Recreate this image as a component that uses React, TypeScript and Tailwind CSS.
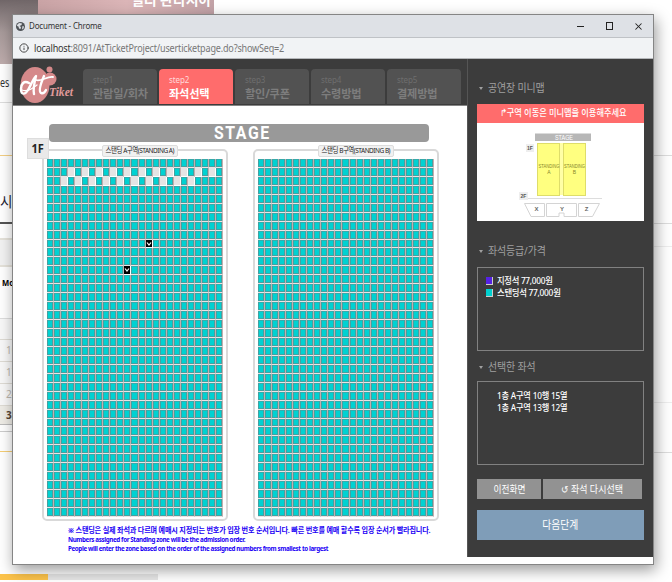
import React from "react";
import { Info, X } from "lucide-react";

const STEPS = [
  ["step1", "관람일/회차"],
  ["step2", "좌석선택"],
  ["step3", "할인/쿠폰"],
  ["step4", "수령방법"],
  ["step5", "결제방법"],
];

const COLS = Array.from({ length: 25 }, (_, i) => i);
const ROWS = Array.from({ length: 40 }, (_, i) => i);

function seatKind(zone: string, row: number, col: number) {
  if (zone !== "A") return "open";
  if ((row === 9 && col === 14) || (row === 12 && col === 11)) return "picked";
  if (row === 1 && col > 2 && col % 2 === 1) return "taken";
  if (row === 2 && col > 1 && col < 21 && col % 2 === 0) return "taken";
  return "open";
}

function Seat({ kind }: { kind: string }) {
  if (kind === "taken") return <div className="mr-px mb-px bg-[#e4e4e4]" />;
  if (kind === "picked")
    return (
      <div className="mr-px mb-px flex items-center justify-center bg-black">
        <svg viewBox="0 0 6 8" className="h-2 w-1.5">
          <path d="M1 2.5 3 5 5 2.5" fill="none" stroke="#fff" strokeWidth="1.2" />
        </svg>
      </div>
    );
  return (
    <div className="border-r border-b border-r-[#c4aeae] border-b-[#eae4e4]">
      <div className="h-full border border-[#45a0a0] border-t-[#35acac] bg-[#00d2d2]" />
    </div>
  );
}

function Zone({ name }: { name: string }) {
  return (
    <section className="relative h-[372px] w-[186px] rounded-[5px] border-2 border-[#d9d9d9] pt-2 pl-[3px]">
      <h3 className={"absolute -top-[6px] flex h-3 w-[76px] items-center justify-center rounded-xs border border-[#dcdcdc] bg-[#f1f1f1] text-[7.5px] whitespace-nowrap text-[#222] " + (name === "A" ? "left-[58px]" : "left-[63px]")}>
        <span className="scale-x-[0.86] tracking-[-0.55px]">스탠딩 {name}구역(STANDING {name})</span>
      </h3>
      <div className="grid h-[358px] w-[176px] grid-cols-[repeat(25,minmax(0,1fr))] grid-rows-[repeat(40,minmax(0,1fr))]">
        {ROWS.map((r) => COLS.map((c) => <Seat key={r + "-" + c} kind={seatKind(name, r, c)} />))}
      </div>
    </section>
  );
}

function SideTitle({ children }: { children: React.ReactNode }) {
  return (
    <h2 className="flex h-4 items-center gap-[5px] pl-0.5 text-[11px] tracking-[-0.1px] text-[#a0a0a0]">
      <span className="h-0 w-0 border-x-2 border-t-[3px] border-x-transparent border-t-[#a0a0a0]" />
      <span className="origin-left scale-x-[0.9]">{children}</span>
    </h2>
  );
}

function Logo() {
  return (
    <svg width="62" height="42" viewBox="0 0 62 42" className="ml-[5px] shrink-0">
      <g fill="#d5898a">
        <ellipse cx="17" cy="22" rx="14.500" ry="18" />
        <circle cx="32" cy="16" r="6.500" />
        <circle cx="31.500" cy="6.500" r="3" />
      </g>
      <g fill="none" stroke="#fff" strokeLinecap="round" strokeLinejoin="round">
        <path d="M11 20C6 17 3 21 3 26c0 6 4 6 7 1 3-5 5-11 8-14-2 8-3 14-2 18" strokeWidth="2.4" />
        <path d="M4 27c4 2 10-1 15-5" strokeWidth="1.3" />
        <path d="M26 13c-3 7-6 15-3 17 2 1 4-1 5-3" strokeWidth="2.4" />
        <path d="M18 17c5 2 11-4 17-3" strokeWidth="1.8" />
      </g>
      <text x="31" y="33" fill="#e09a9a" fontFamily="Liberation Serif" fontStyle="italic" fontWeight="700" fontSize="12.500" textLength="24" lengthAdjust="spacingAndGlyphs">Tiket</text>
    </svg>
  );
}

function GlobeIcon() {
  return (
    <svg width="9" height="9" viewBox="0 0 18 18" className="mr-1 shrink-0">
      <circle cx="9" cy="9" r="9" fill="#4f5357" />
      <path d="M7 2l5 1-1 3-4 2 3 2-1 4-3-1-1-4-3-1c0-3 2-5 5-6zM13 8l3 1-1 4-3 2z" fill="#dee1e6" />
    </svg>
  );
}

function MiniMap() {
  return (
    <svg width="167" height="98" viewBox="0 0 167 98" className="block bg-white" textAnchor="middle" fontFamily="Liberation Sans">
      <rect x="58" y="10.500" width="56" height="7.500" fill="#b7b7b7" />
      <text x="87" y="16.800" fontSize="7" fill="#fff" textLength="18" lengthAdjust="spacingAndGlyphs">STAGE</text>
      <rect x="60" y="20" width="49" height="52" fill="#ffffa6" />
      <g fill="#ffff80" stroke="#dedd6a" strokeWidth="1">
        <rect x="60.500" y="20.500" width="22" height="52" />
        <rect x="86.500" y="20.500" width="22" height="52" />
      </g>
      <g fill="#86862c" fontSize="5">
        <text x="72" y="44.500" textLength="21" lengthAdjust="spacingAndGlyphs">STANDING</text><text x="72" y="51">A</text>
        <text x="97.500" y="44.500" textLength="21" lengthAdjust="spacingAndGlyphs">STANDING</text><text x="97.500" y="51">B</text>
      </g>
      <rect x="49" y="21" width="8" height="8" fill="#eee" />
      <rect x="42" y="69" width="9" height="8" fill="#eee" />
      <g fontSize="5" fontWeight="700" fill="#555"><text x="53" y="27">1F</text><text x="46.500" y="75">2F</text></g>
      <path d="M51 75.500H125" stroke="#ddd" />
      <g fill="#fff" stroke="#d4d4d4">
        <path d="M47.500 80.500H67.500V93.500H54Z" />
        <path d="M69.500 80.500H99.500V93.500H87V90H82V93.500H69.500Z" />
        <path d="M101.500 80.500H122.500L115.500 93.500H101.500Z" />
      </g>
      <g fontSize="6" fontWeight="700" fill="#666"><text x="59.500" y="88">X</text><text x="85" y="88">Y</text><text x="109.500" y="88">Z</text></g>
    </svg>
  );
}

function PageBehind() {
  return (
    <div className="flex h-[582px] flex-col text-[#333]">
      <div className="flex h-16 shrink-0 overflow-hidden">
        <div className="h-full w-[38px] bg-linear-to-b from-[#706668] via-[#a79a9a] to-[#beacac]" />
        <div className="h-3.5 w-44 bg-linear-to-r from-[#c9a3a5] via-[#dbb5b7] to-[#c2a2a7] pl-[93px]">
          <p className="-mt-[8px] text-[14px] leading-4 font-bold tracking-[-0.1px] whitespace-nowrap text-white">멀티 판타지아</p>
        </div>
      </div>
      <div className="flex h-[39px] shrink-0 items-center border-b border-[#ddd] text-[12px]">
        <span className="origin-left scale-x-[0.75]">es</span>
      </div>
      <div className="h-[53px] shrink-0 border-b border-[#f3cf84]" />
      <div className="flex h-[68px] shrink-0 items-center border-b-2 border-[#555] pt-6 text-[15px]">
        <span className="origin-left scale-x-[0.9] text-[#223]">시</span>
      </div>
      <div className="flex h-[208px] shrink-0 border-b border-[#ccc]">
        <div className="flex w-14 flex-col pt-3.5 text-[10px]">
          <div className="h-[29px] border-y-2 border-[#e5e2da] bg-[#f2f2f2]" />
          <div className="flex h-[52px] items-center border-b border-[#ddd] pl-0.5 pb-5 text-[9px] font-bold text-black">
            <span className="origin-left scale-x-[0.85]">Mo</span>
          </div>
          <div className="h-[21px] border-b border-[#dedbd4] bg-[#f8f8f8]" />
          {["10", "17", "24"].map((d) => (
            <div key={d} className="flex h-[22px] items-center border-b border-[#dedbd4] bg-[#f8f8f8] pl-1.5 text-[#bbb6ac]">{d}</div>
          ))}
          <div className="flex h-[19px] items-center border-b border-[#bbb] bg-[#eeece6] pl-1.5 font-bold text-[#543]">31</div>
        </div>
      </div>
      <div className="h-[20px] shrink-0 border-b border-[#f5ce75]" />
      <div className="mt-auto flex h-2">
        <div className="h-1.5 w-12 bg-[#fcc34b]" />
        <div className="h-1.5 w-[110px] bg-[#e6e6e6]" />
      </div>
    </div>
  );
}

export default function App() {
  return (
    <div className="relative h-[582px] w-[672px] overflow-hidden bg-white font-['Noto_Sans','Noto_Sans_CJK_KR',sans-serif]">
      <PageBehind />
      <div className="absolute top-0 right-0 flex h-full w-5 flex-col bg-white">
        <div className="h-[156px] border-b border-[#ddd]" />
        <div className="h-[68px] border-b border-[#ddd]" />
        <div className="h-[23px] border-b border-[#eee]" />
        <div className="h-[156px] border-b border-[#eee]" />
        <div className="h-[50px] border-b border-[#ddd]" />
      </div>

      <div className="absolute top-3.5 left-3 flex h-[551px] w-[642px] flex-col border border-[#858585] bg-white shadow-[2px_5px_14px_rgba(0,0,0,0.4)]">
        <header className="flex h-[23px] shrink-0 items-center border-b border-[#bfc2c6] bg-[#dee1e6] pl-[3px] text-[9.5px] text-[#333]">
          <GlobeIcon />
          <span className="origin-left scale-x-[0.84] tracking-[-0.22px]">Document - Chrome</span>
          <div className="ml-auto flex items-center gap-[22px] pr-[9px] text-[#222]">
            <span className="h-px w-[7px] bg-[#222]" />
            <span className="h-2 w-[7px] border border-[#222]" />
            <X size={11} strokeWidth={2.2} className="-ml-0.5" />
          </div>
        </header>
        <div className="flex h-[21px] shrink-0 items-center border-b border-[#b5b7ba] bg-[#f1f3f5] pl-1.5 text-[10px] text-[#777]">
          <Info size={10} strokeWidth={2.3} className="mr-[5px] text-[#444]" />
          <span className="origin-left scale-x-[0.905] tracking-[-0.2px]"><span className="text-[#333]">localhost</span>:8091/AtTicketProject/userticketpage.do?showSeq=2</span>
        </div>

        <div className="flex h-[498px] bg-[#3c3c3c]">
          <main className="flex w-[455px] flex-col border-r border-[#555]">
            <nav className="flex h-[46px] shrink-0 items-end">
              <Logo />
              <div className="ml-[3px] flex gap-0.5 pb-px">
                {STEPS.map(([step, name], i) => (
                  <div key={step} className={"flex h-[35px] w-[74px] flex-col rounded-t pl-2.5 pt-[5px] " + (i === 1 ? "bg-[#ff6c6c] text-white" : "bg-[#525252] text-[#7d7d7d]")}>
                    <span className={"text-[8px] leading-[12px] tracking-[-0.1px] " + (i === 1 ? "text-[#ffdada]" : "text-[#6e6e6e]")}>{step}</span>
                    <b className="origin-left scale-x-[0.97] text-[11.5px] leading-[15px] tracking-[-0.2px] whitespace-nowrap">{name}</b>
                  </div>
                ))}
              </div>
            </nav>
            <div className="flex h-[452px] flex-col border-t border-[#858585] bg-white pt-[18px]">
              <div className="ml-9 flex h-[18px] w-[380px] shrink-0 items-center justify-center rounded bg-[#999] pl-1.5 text-[18px] leading-none font-bold tracking-[1.8px] text-white">
                <span className="scale-x-[0.88] font-['Roboto']">STAGE</span>
              </div>
              <div className="relative mt-[7px] flex gap-[25px] pl-[29px]">
                <div className="absolute -top-[11px] left-3.5 z-10 flex h-[21px] w-[22px] items-center justify-center border border-[#ddd] bg-[#e9e9e9] text-[12px] font-bold text-[#222]">
                  <span className="scale-x-[0.92]">1F</span>
                </div>
                <Zone name="A" />
                <Zone name="B" />
              </div>
              <div className="flex flex-col items-start pt-[5px] pl-[55px] text-[7.5px] leading-[9px] font-bold whitespace-nowrap text-[#1b00f5]">
                <p className="origin-left scale-x-[0.95] tracking-[-0.2px]">※ 스탠딩은 실제 좌석과 다르며 예매시 지정되는 번호가 입장 번호 순서입니다. 빠른 번호를 예매 할수록 입장 순서가 빨라집니다.</p>
                <p className="origin-left scale-x-[0.83] tracking-[-0.45px]">Numbers assigned for Standing zone will be the admission order.</p>
                <p className="origin-left scale-x-[0.83] tracking-[-0.45px]">People will enter the zone based on the order of the assigned numbers from smallest to largest</p>
              </div>
            </div>
          </main>

          <aside className="flex flex-col pt-[21px] pl-[9px]">
            <SideTitle>공연장 미니맵</SideTitle>
            <div className="mt-2 w-[167px]">
              <p className="flex h-[19px] items-center justify-center bg-[#ff6c6c] pl-1.5 text-[9.5px] font-medium whitespace-nowrap text-white">
                <span className="scale-x-[0.865]">↱구역 이동은 미니맵을 이용해주세요</span>
              </p>
              <MiniMap />
            </div>
            <div className="mt-[22px]"><SideTitle>좌석등급/가격</SideTitle></div>
            <ul className="mt-2 h-[84px] w-[167px] border border-[#818181] pt-[7px] pl-2 text-[9px] leading-3 font-medium tracking-[-0.3px] text-white">
              <li className="flex items-center gap-1"><i className="h-2 w-[7px] border-r border-b border-[#ccc] bg-[#5522e4]" /><span className="origin-left scale-x-[0.92]">지정석 77,000원</span></li>
              <li className="flex items-center gap-1"><i className="h-2 w-[7px] border-r border-b border-[#ccc] bg-[#00cfcf]" /><span className="origin-left scale-x-[0.93]">스탠딩석 77,000원</span></li>
            </ul>
            <div className="mt-2"><SideTitle>선택한 좌석</SideTitle></div>
            <ul className="mt-1.5 h-[84px] w-[167px] border border-[#818181] pt-2 pl-[19px] text-[9px] leading-3 font-medium tracking-[-0.2px] text-white">
              <li className="origin-left scale-x-[0.91]">1층 A구역 10행 15열</li>
              <li className="origin-left scale-x-[0.91]">1층 A구역 13행 12열</li>
            </ul>
            <div className="mt-3.5 flex gap-0.5 text-[10px] text-white">
              <button className="h-5 w-16 bg-[#929292]"><span className="inline-block scale-x-[0.87]">이전화면</span></button>
              <button className="h-5 w-[99px] bg-[#929292]"><span className="inline-block scale-x-[0.9]">↺ 좌석 다시선택</span></button>
            </div>
            <button className="mt-[11px] h-[30px] w-[167px] bg-[#7f9db8] text-[11px] text-white"><span className="inline-block scale-x-[0.89]">다음단계</span></button>
          </aside>
        </div>
      </div>
    </div>
  );
}
